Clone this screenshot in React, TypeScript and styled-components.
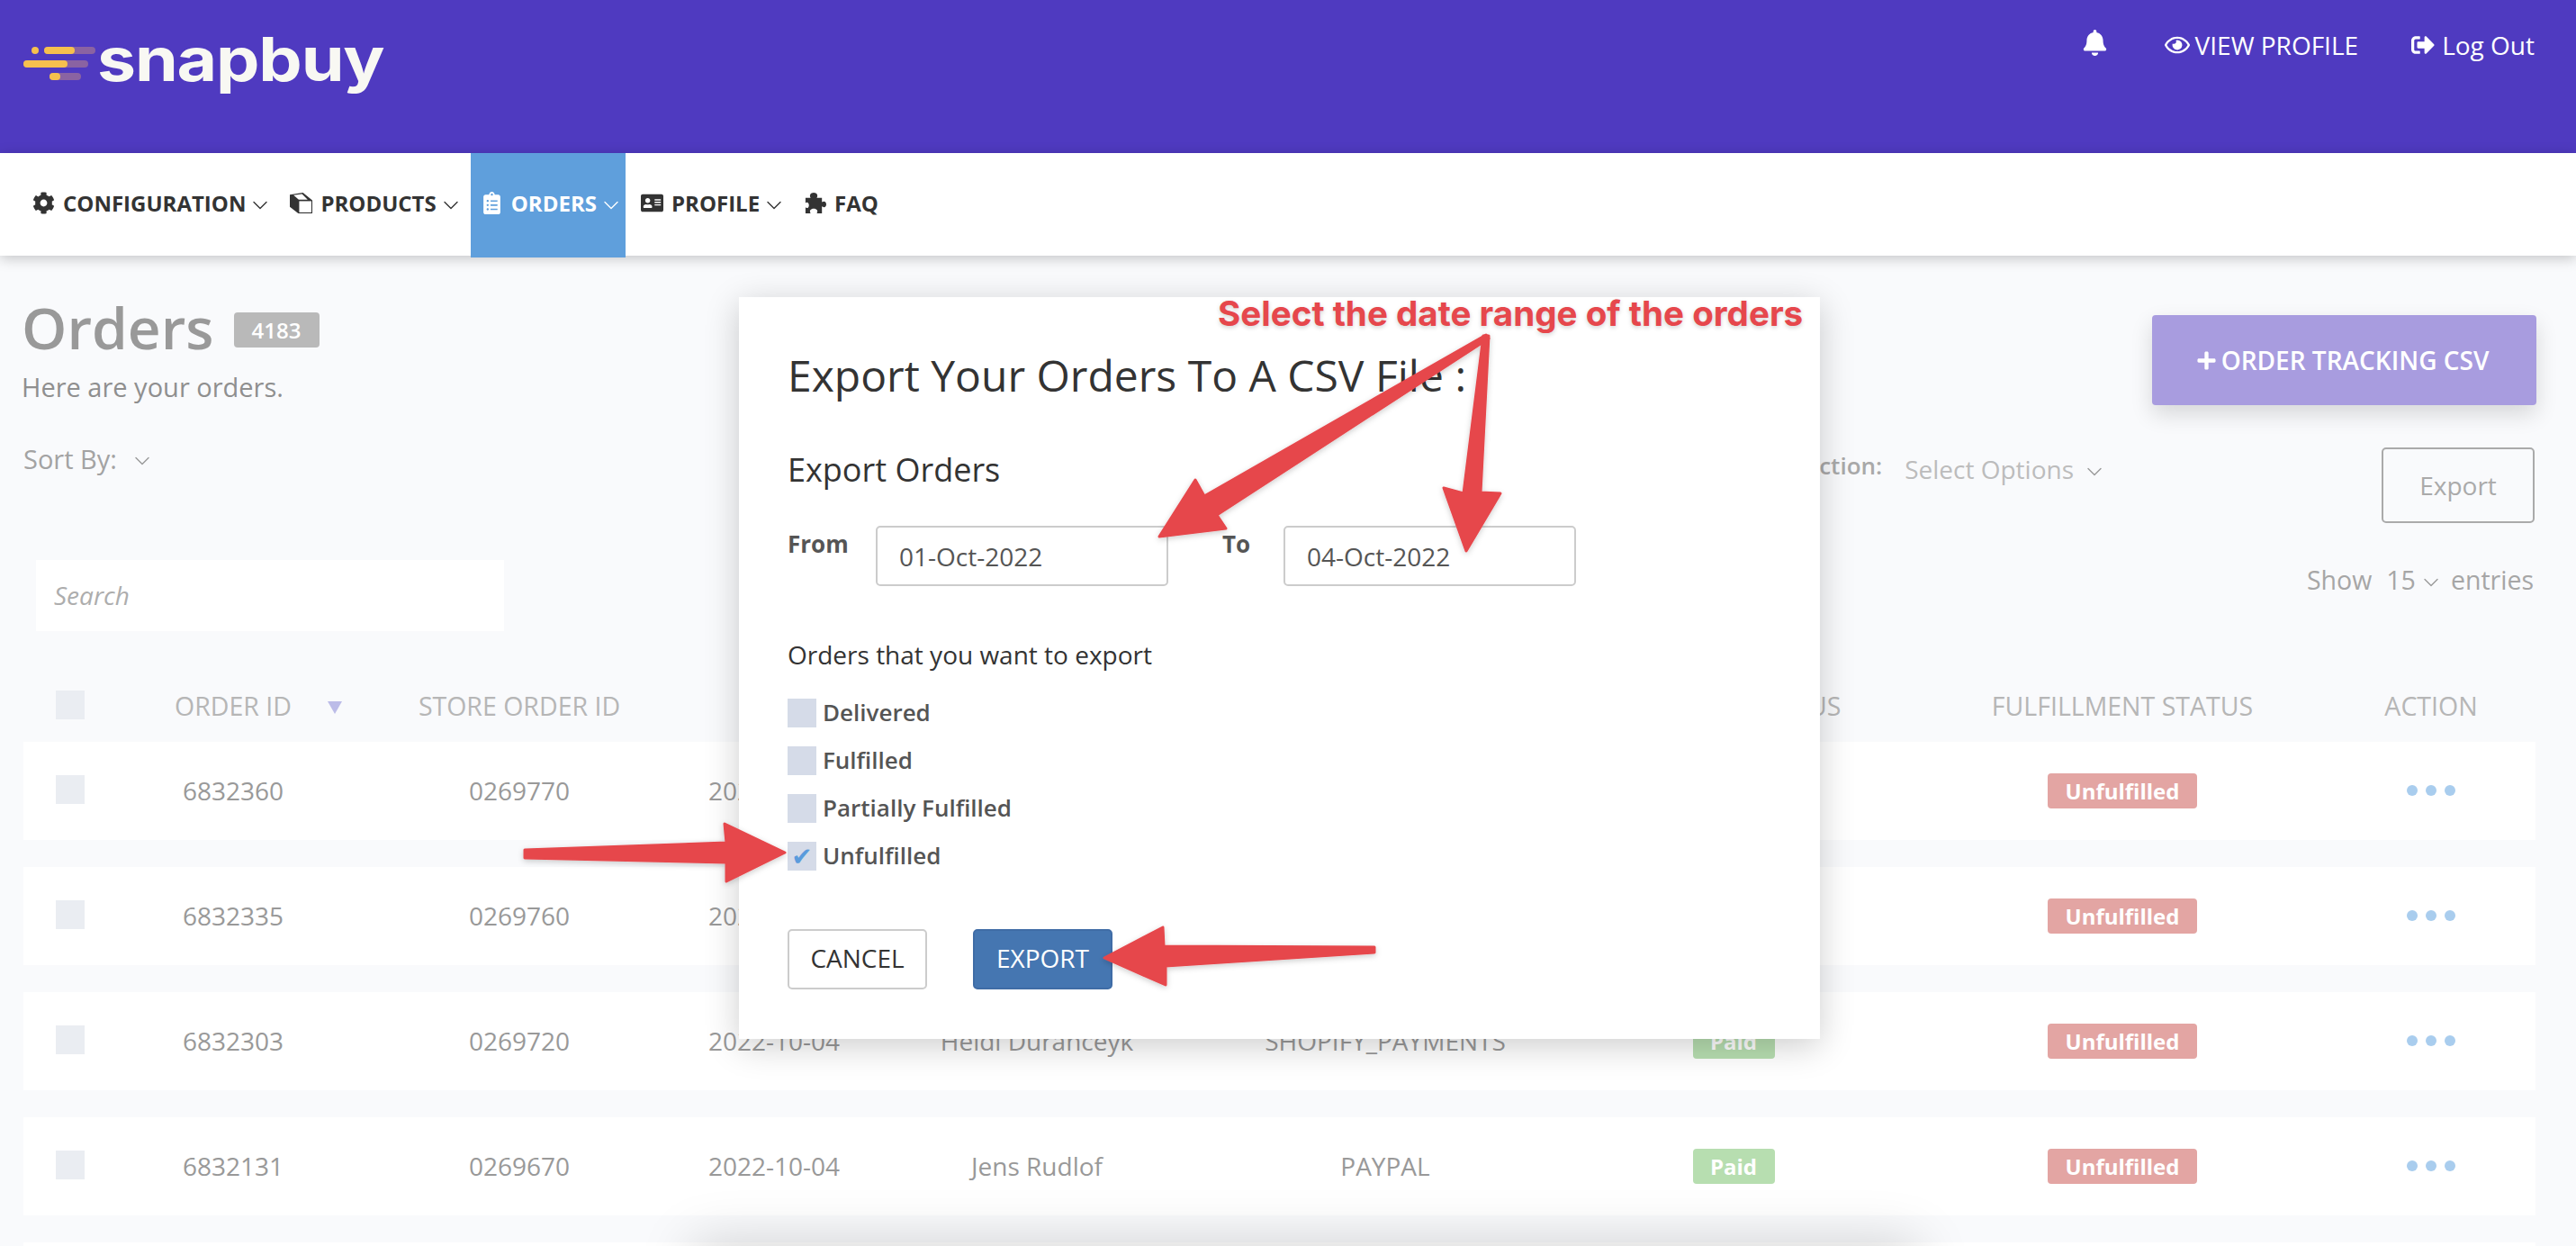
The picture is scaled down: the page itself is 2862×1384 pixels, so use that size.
import React from 'react';
import styled, { createGlobalStyle } from 'styled-components';
import { ChevronDown } from 'lucide-react';
import {
  FaAddressCard, FaBell, FaClipboardList, FaCog, FaPlus, FaRegEye, FaSignOutAlt,
} from 'react-icons/fa';

const GlobalStyle = createGlobalStyle`
  html, body {
    margin: 0;
    padding: 0;
    background: #f9fafc;
  }
  * {
    box-sizing: border-box;
  }
`;

const brand = '#4f3ac0';
const annotationRed = '#e6474c';

const Page = styled.div`
  position: relative;
  width: 2862px;
  height: 1384px;
  overflow: hidden;
  background: #f9fafc;
  font-family: "Open Sans", "Noto Sans", sans-serif;
  font-size: 28px;
  color: #999;
`;

/* ---------- top bar ---------- */

const TopBar = styled.header`
  display: flex;
  justify-content: space-between;
  height: 170px;
  padding: 0 46px 0 26px;
  background: ${brand};
  color: #fff;
`;

const Logo = styled.div`
  display: flex;
  align-items: flex-start;
  padding-top: 30px;
`;

const LogoMarkSlot = styled.div`
  padding-top: 22px;
`;

const Wordmark = styled.span`
  display: block;
  font-family: Inter, "Liberation Sans", sans-serif;
  font-size: 67px;
  font-weight: 700;
  line-height: 72px;
  letter-spacing: -1px;
  color: #f8f8f3;
  transform: scaleX(1.147);
  transform-origin: left center;
`;

const TopLinks = styled.div`
  display: flex;
  align-items: center;
  height: 100px;
  font-size: 28px;
`;

const TopLink = styled.span<{ $gap: number; $iconGap: number; $iconSize: number }>`
  display: flex;
  align-items: center;
  gap: ${(p) => p.$iconGap}px;
  margin-left: ${(p) => p.$gap}px;
  svg {
    font-size: ${(p) => p.$iconSize}px;
  }
`;

const BellButton = styled.span`
  display: flex;
  margin-top: -6px;
  font-size: 29px;
`;

/* ---------- main nav ---------- */

const Nav = styled.nav`
  position: relative;
  z-index: 1;
  display: flex;
  gap: 6px;
  height: 114px;
  padding-left: 25px;
  background: #fff;
  box-shadow: 0 3px 14px rgba(0, 0, 0, 0.22);
`;

const NavItem = styled.a<{ $active?: boolean }>`
  display: flex;
  align-items: center;
  height: 116px;
  padding: 0 9px 5px 11px;
  font-size: 24px;
  font-weight: 700;
  color: ${(p) => (p.$active ? '#fff' : '#333')};
  background: ${(p) => (p.$active ? '#5f9fdc' : 'transparent')};
  svg.nav-icon {
    flex: none;
    width: 25px;
    height: 25px;
    margin-right: 9px;
  }
`;

const NavCaret = styled(ChevronDown)`
  width: 28px;
  height: 28px;
  margin: 5px -7px 0 2px;
  stroke-width: 1.2;
`;

/* ---------- page content ---------- */

const Content = styled.main`
  padding: 46px 44px 0 26px;
`;

const TitleRow = styled.div`
  display: flex;
  justify-content: space-between;
`;

const TitleLine = styled.div`
  display: flex;
  align-items: center;
  height: 74px;
  margin: -3px 0 0 -2px;
`;

const Title = styled.h1`
  margin: 0;
  font-size: 64px;
  font-weight: 600;
  line-height: 74px;
  color: #999;
`;

const CountBadge = styled.span`
  display: flex;
  align-items: center;
  justify-content: center;
  width: 95px;
  height: 39px;
  margin: 4px 0 0 22px;
  border-radius: 4px;
  background: #b9b9b9;
  color: #fff;
  font-size: 24px;
  font-weight: 600;
`;

const Subtitle = styled.p`
  margin: 9px 0 0 -2px;
  font-size: 29px;
  line-height: 40px;
  color: #8f8f8f;
`;

const TrackingButton = styled.button`
  display: flex;
  align-items: center;
  justify-content: center;
  gap: 5px;
  width: 427px;
  height: 100px;
  margin-top: 20px;
  border: 0;
  border-radius: 4px;
  background: #a89cdf;
  color: #fff;
  font: 600 28px "Open Sans", sans-serif;
  box-shadow: 0 10px 24px rgba(0, 0, 0, 0.14);
  svg {
    margin-left: -4px;
    font-size: 23px;
  }
`;

const FilterRow = styled.div`
  display: flex;
  justify-content: space-between;
  align-items: flex-start;
  height: 92px;
  margin-top: 39px;
`;

const SortBy = styled.div`
  display: flex;
  align-items: center;
  height: 40px;
  color: #a3a3a3;
  font-size: 29px;
  font-weight: 500;
`;

const ActionGroup = styled.div`
  display: flex;
  align-items: flex-start;
  margin-right: 2px;
`;

const ActionLabel = styled.span`
  margin-top: 8px;
  line-height: 40px;
  font-size: 26px;
  font-weight: 600;
  color: #a9a9a9;
`;

const SelectValue = styled.span`
  display: flex;
  align-items: center;
  margin: 12px 305px 0 25px;
  line-height: 40px;
  color: #bcbcbc;
`;

const SmallCaret = styled(ChevronDown)<{ $left: number }>`
  width: 28px;
  height: 28px;
  margin: 5px 0 0 ${(p) => p.$left}px;
  stroke-width: 1.2;
  color: #999;
`;

const OutlineButton = styled.button`
  width: 170px;
  height: 84px;
  margin-top: 8px;
  border: 2px solid #aaa;
  border-radius: 5px;
  background: transparent;
  color: #aaa;
  font: 400 28px "Open Sans", sans-serif;
`;

const SearchRow = styled.div`
  display: flex;
  justify-content: space-between;
  height: 79px;
  margin-top: 41px;
`;

const SearchBox = styled.div`
  display: flex;
  align-items: center;
  width: 520px;
  margin-left: 14px;
  padding: 0 0 2px 20px;
  background: #fff;
  font-style: italic;
  color: #adadad;
`;

const EntriesControl = styled.div`
  display: flex;
  align-items: center;
  height: 44px;
  margin-right: 3px;
  color: #a6a6a6;
  font-size: 28.5px;
  font-weight: 500;
`;

const EntriesValue = styled.span`
  display: flex;
  align-items: center;
  margin: 0 8px 0 16px;
`;

/* ---------- table ---------- */

const columns = '104px 258px 378px 188px 396px 378px 396px 468px 218px 7px';

const HeaderRow = styled.div`
  display: grid;
  grid-template-columns: ${columns};
  align-items: center;
  height: 42px;
  margin-top: 64px;
  padding-bottom: 4px;
  color: #b6b6b6;
  font-size: 28.5px;
  text-align: center;
`;

const TableBody = styled.div`
  display: flex;
  flex-direction: column;
  gap: 30px;
  margin-top: 17px;
`;

const Row = styled.div`
  display: grid;
  grid-template-columns: ${columns};
  align-items: center;
  width: 2791px;
  height: 109px;
  padding-bottom: 2px;
  background: #fff;
  text-align: center;
`;

const Cell = styled.div`
  display: flex;
  justify-content: center;
  align-items: center;
  white-space: nowrap;
`;

const HeaderLabel = styled.span`
  position: relative;
`;

const SortArrow = styled.span`
  position: absolute;
  left: 170px;
  top: 14px;
  width: 0;
  height: 0;
  border-left: 8px solid transparent;
  border-right: 8px solid transparent;
  border-top: 14px solid #bcbce8;
`;

const RowCheck = styled.span`
  display: block;
  width: 32px;
  height: 32px;
  margin-top: -2px;
  background: #eaedf2;
`;

const StatusBadge = styled.span<{ $tone: 'paid' | 'open' }>`
  display: flex;
  align-items: center;
  justify-content: center;
  width: ${(p) => (p.$tone === 'paid' ? 91 : 166)}px;
  height: 39px;
  margin-top: 2px;
  border-radius: 4px;
  background: ${(p) => (p.$tone === 'paid' ? '#b7deb0' : '#e3a5a3')};
  color: #fff;
  font-size: 24px;
  font-weight: 700;
`;

const Dots = styled.span`
  display: flex;
  gap: 9px;
  i {
    display: block;
    width: 12px;
    height: 12px;
    border-radius: 50%;
    background: #a9cdee;
  }
`;

/* ---------- export dialog ---------- */

const Dialog = styled.section`
  position: absolute;
  left: 821px;
  top: 330px;
  width: 1201px;
  height: 824px;
  padding: 55px 54px 0;
  background: #fff;
  color: #333;
  box-shadow: 0 8px 36px rgba(0, 0, 0, 0.2);
`;

const DialogTitle = styled.h2`
  margin: 0;
  font-size: 48px;
  font-weight: 400;
  line-height: 64px;
  color: #333;
`;

const DialogSubtitle = styled.h3`
  margin: 48px 0 0;
  font-size: 36px;
  font-weight: 400;
  line-height: 50px;
`;

const DateRow = styled.div`
  display: flex;
  margin-top: 37px;
`;

const DateLabel = styled.label<{ $width: number }>`
  width: ${(p) => p.$width}px;
  margin-top: -2px;
  font-size: 26px;
  font-weight: 700;
  line-height: 44px;
  color: #555;
`;

const DateInput = styled.div`
  display: flex;
  align-items: center;
  width: 325px;
  height: 67px;
  margin-right: 60px;
  padding-left: 24px;
  border: 2px solid #ccc;
  border-radius: 5px;
  background: #fff;
  color: #555;
`;

const GroupLabel = styled.p`
  margin: 56px 0 0;
  font-size: 28px;
  line-height: 40px;
`;

const CheckList = styled.div`
  display: flex;
  flex-direction: column;
  gap: 21px;
  margin-top: 29px;
`;

const CheckRow = styled.label`
  display: flex;
  align-items: center;
  gap: 7px;
  height: 32px;
  font-size: 26px;
  font-weight: 600;
  color: #555;
  span + span {
    margin-top: -3px;
  }
`;

const CheckBox = styled.span`
  display: flex;
  align-items: center;
  justify-content: center;
  width: 32px;
  height: 32px;
  background: #d5dbe8;
  color: #5a9bdc;
  font: italic 28px "DejaVu Sans", sans-serif;
`;

const DialogActions = styled.div`
  display: flex;
  gap: 51px;
  margin-top: 65px;
`;

const DialogButton = styled.button<{ $primary?: boolean }>`
  width: 155px;
  height: 67px;
  padding-bottom: 4px;
  border: 2px solid ${(p) => (p.$primary ? '#3f6ca6' : '#ccc')};
  border-radius: 5px;
  background: ${(p) => (p.$primary ? '#4576b1' : '#fff')};
  color: ${(p) => (p.$primary ? '#fff' : '#333')};
  font: 400 28px "Open Sans", sans-serif;
`;

/* ---------- overlays on top of the screenshot ---------- */

const ArrowLayer = styled.svg`
  position: absolute;
  left: 0;
  top: 0;
  pointer-events: none;
`;

const Annotation = styled.div`
  position: absolute;
  left: 1353px;
  top: 326px;
  font-family: Inter, "Liberation Sans", sans-serif;
  font-size: 38.6px;
  font-weight: 700;
  line-height: 44px;
  white-space: nowrap;
  color: ${annotationRed};
  text-shadow: 0 2px 5px rgba(0, 0, 0, 0.18);
`;

/* shadow of a dialog sitting just below the visible area */
const LowerShadow = styled.div`
  position: absolute;
  left: 790px;
  top: 1400px;
  width: 1320px;
  height: 120px;
  box-shadow: 0 0 60px 20px rgba(0, 0, 0, 0.17);
`;

const ProductsIcon = () => (
  <svg className="nav-icon" viewBox="0 0 24 22" aria-hidden="true">
    <path fill="#333" d="M0 2 14 0l10 8v14H9l-9-7z" />
    <path fill="#fff" d="M10 9h13v12H10z" />
    <path fill="#fff" d="M4 2.5l9-1 6 6H9.5z" />
  </svg>
);

const PuzzleIcon = () => (
  <svg className="nav-icon" viewBox="0 0 26 24" aria-hidden="true">
    <path
      fill="#333"
      d="M2 6h6C6 3 8 0 11.5 0S17 3 15 6h6v5c3-2 5 0 5 2.5S24 18 21 16v8h-6c2-3 0-5.5-3.5-5.5S6 21 8 24H2v-7c2 2 4 0 4-2.5S4 10 2 12z"
    />
  </svg>
);

const LogoMark = () => (
  <svg width="82" height="40" viewBox="0 0 82 40" aria-hidden="true">
    <rect x="23" y="0" width="57" height="8" rx="4" fill="#8a63a2" />
    <rect x="23" y="0" width="34" height="8" rx="4" fill="#f6c04e" />
    <circle cx="13" cy="4" r="4" fill="#f6c04e" />
    <rect x="0" y="15" width="72" height="8" rx="4" fill="#8a63a2" />
    <rect x="0" y="15" width="49" height="8" rx="4" fill="#f6c04e" />
    <rect x="29" y="29" width="35" height="8" rx="4" fill="#8a63a2" />
    <rect x="29" y="29" width="12" height="8" rx="4" fill="#f6c04e" />
  </svg>
);

type Order = {
  id: string;
  storeId: string;
  date: string;
  customer?: string;
  method?: string;
  paid?: boolean;
};

const orders: Order[] = [
  { id: '6832360', storeId: '0269770', date: '2022-10-04' },
  { id: '6832335', storeId: '0269760', date: '2022-10-04' },
  {
    id: '6832303', storeId: '0269720', date: '2022-10-04', customer: 'Heidi Duranceyk', method: 'SHOPIFY_PAYMENTS', paid: true,
  },
  {
    id: '6832131', storeId: '0269670', date: '2022-10-04', customer: 'Jens Rudlof', method: 'PAYPAL', paid: true,
  },
];

const arrows = [
  '1651,372 1654,376 1352,572 1362,587 1288,596 1328,533 1338,551',
  '1648,373 1654,373 1645,547 1667,548 1629,612 1604,542 1626,548',
  '583,944 807,936 805,915 872,947 807,979 807,958 583,953',
  '1527,1052 1293,1051 1292,1030 1227,1064 1295,1094 1295,1073 1527,1058',
];

const statusOptions = ['Delivered', 'Fulfilled', 'Partially Fulfilled', 'Unfulfilled'];

const App = () => (
  <Page>
    <GlobalStyle />
    <TopBar>
      <Logo>
        <LogoMarkSlot><LogoMark /></LogoMarkSlot>
        <Wordmark>snapbuy</Wordmark>
      </Logo>
      <TopLinks>
        <BellButton><FaBell /></BellButton>
        <TopLink $gap={63} $iconGap={6} $iconSize={28}>
          <FaRegEye />
          VIEW PROFILE
        </TopLink>
        <TopLink $gap={59} $iconGap={8} $iconSize={26}>
          <FaSignOutAlt />
          Log Out
        </TopLink>
      </TopLinks>
    </TopBar>

    <Nav>
      <NavItem>
        <FaCog className="nav-icon" />
        CONFIGURATION
        <NavCaret />
      </NavItem>
      <NavItem>
        <ProductsIcon />
        PRODUCTS
        <NavCaret />
      </NavItem>
      <NavItem $active>
        <FaClipboardList className="nav-icon" />
        ORDERS
        <NavCaret />
      </NavItem>
      <NavItem>
        <FaAddressCard className="nav-icon" />
        PROFILE
        <NavCaret />
      </NavItem>
      <NavItem>
        <PuzzleIcon />
        FAQ
      </NavItem>
    </Nav>

    <Content>
      <TitleRow>
        <div>
          <TitleLine>
            <Title>Orders</Title>
            <CountBadge>4183</CountBadge>
          </TitleLine>
          <Subtitle>Here are your orders.</Subtitle>
        </div>
        <TrackingButton>
          <FaPlus />
          ORDER TRACKING CSV
        </TrackingButton>
      </TitleRow>

      <FilterRow>
        <SortBy>
          Sort By:
          <SmallCaret $left={14} />
        </SortBy>
        <ActionGroup>
          <ActionLabel>Action:</ActionLabel>
          <SelectValue>
            Select Options
            <SmallCaret $left={9} />
          </SelectValue>
          <OutlineButton>Export</OutlineButton>
        </ActionGroup>
      </FilterRow>

      <SearchRow>
        <SearchBox>Search</SearchBox>
        <EntriesControl>
          Show
          <EntriesValue>
            15
            <SmallCaret $left={3} />
          </EntriesValue>
          entries
        </EntriesControl>
      </SearchRow>

      <HeaderRow>
        <Cell><RowCheck /></Cell>
        <Cell>
          <HeaderLabel>
            ORDER ID
            <SortArrow />
          </HeaderLabel>
        </Cell>
        <Cell>STORE ORDER ID</Cell>
        <Cell>DATE</Cell>
        <Cell>CUSTOMER</Cell>
        <Cell>PAYMENT METHOD</Cell>
        <Cell>PAYMENT STATUS</Cell>
        <Cell>FULFILLMENT STATUS</Cell>
        <Cell>ACTION</Cell>
      </HeaderRow>

      <TableBody>
        {orders.map((order) => (
          <Row key={order.id}>
            <Cell><RowCheck /></Cell>
            <Cell>{order.id}</Cell>
            <Cell>{order.storeId}</Cell>
            <Cell>{order.date}</Cell>
            <Cell>{order.customer}</Cell>
            <Cell>{order.method}</Cell>
            <Cell>{order.paid && <StatusBadge $tone="paid">Paid</StatusBadge>}</Cell>
            <Cell><StatusBadge $tone="open">Unfulfilled</StatusBadge></Cell>
            <Cell>
              <Dots>
                <i />
                <i />
                <i />
              </Dots>
            </Cell>
          </Row>
        ))}
        <Row />
      </TableBody>
    </Content>

    <LowerShadow />

    <Dialog>
      <DialogTitle>Export Your Orders To A CSV File :</DialogTitle>
      <DialogSubtitle>Export Orders</DialogSubtitle>
      <DateRow>
        <DateLabel $width={98}>From</DateLabel>
        <DateInput>01-Oct-2022</DateInput>
        <DateLabel $width={68}>To</DateLabel>
        <DateInput>04-Oct-2022</DateInput>
      </DateRow>
      <GroupLabel>Orders that you want to export</GroupLabel>
      <CheckList>
        {statusOptions.map((option) => (
          <CheckRow key={option}>
            <CheckBox>{option === 'Unfulfilled' ? '✔' : ''}</CheckBox>
            <span>{option}</span>
          </CheckRow>
        ))}
      </CheckList>
      <DialogActions>
        <DialogButton>CANCEL</DialogButton>
        <DialogButton $primary>EXPORT</DialogButton>
      </DialogActions>
    </Dialog>

    <ArrowLayer width="2862" height="1384" viewBox="0 0 2862 1384" aria-hidden="true">
      <defs>
        <filter id="arrowShadow" x="-10%" y="-10%" width="120%" height="120%">
          <feDropShadow dx="0" dy="2" stdDeviation="3" floodColor="#000" floodOpacity="0.2" />
        </filter>
      </defs>
      <g fill={annotationRed} stroke={annotationRed} strokeWidth="3" strokeLinejoin="round" filter="url(#arrowShadow)">
        {arrows.map((points) => <polygon key={points} points={points} />)}
      </g>
    </ArrowLayer>
    <Annotation>Select the date range of the orders</Annotation>
  </Page>
);

export default App;
